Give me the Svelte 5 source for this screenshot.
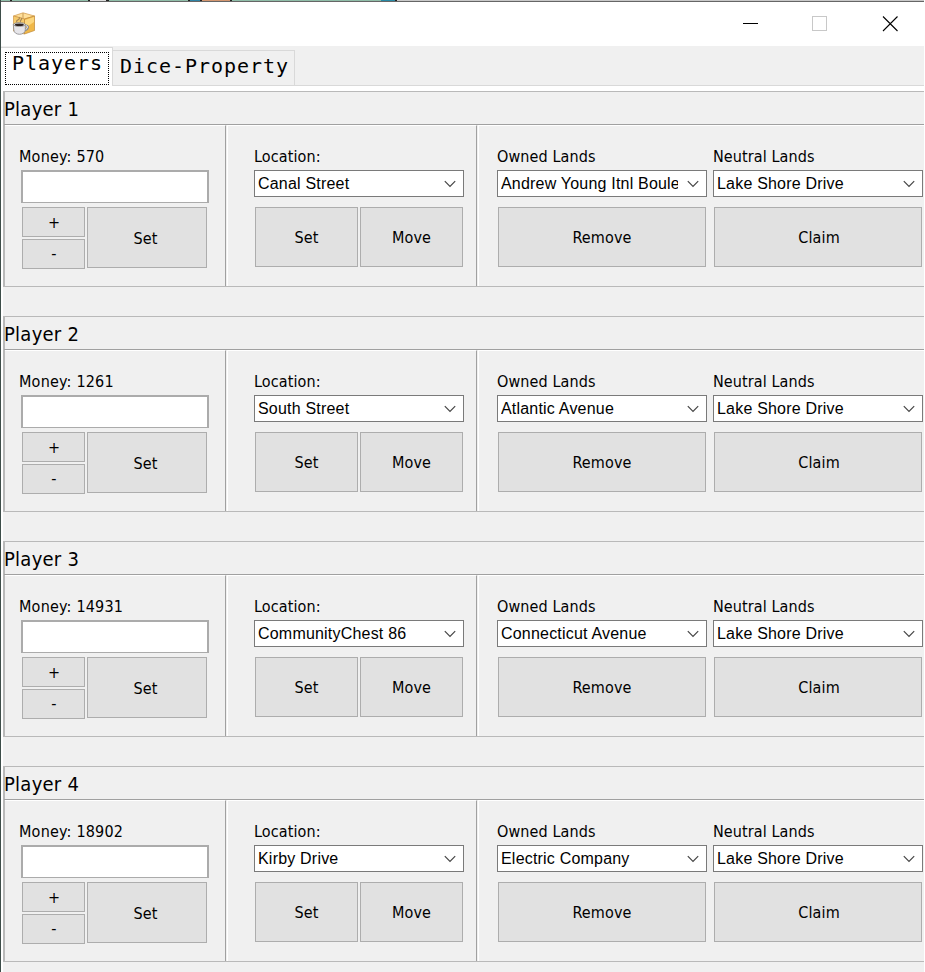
<script>
  const players = [
    { name: 'Player 1', money: 570, location: 'Canal Street', owned: 'Andrew Young Itnl Boulevard', neutral: 'Lake Shore Drive' },
    { name: 'Player 2', money: 1261, location: 'South Street', owned: 'Atlantic Avenue', neutral: 'Lake Shore Drive' },
    { name: 'Player 3', money: 14931, location: 'CommunityChest 86', owned: 'Connecticut Avenue', neutral: 'Lake Shore Drive' },
    { name: 'Player 4', money: 18902, location: 'Kirby Drive', owned: 'Electric Company', neutral: 'Lake Shore Drive' }
  ];
</script>

{#snippet combo(value)}
  <div class="combo">
    <span class="value">{value}</span>
    <svg width="12" height="8" viewBox="0 0 12 8"><path d="M.8 1.2 6 6.4 11.2 1.2" fill="none" stroke="#444" stroke-width="1.2" /></svg>
  </div>
{/snippet}

<div class="window">
  <div class="backdrop"></div>
  <header class="titlebar">
    <svg class="logo" width="24" height="24" viewBox="0 0 24 24">
      <path d="M1.5 4 11 .8 22.5 4 12.5 7z" fill="#ffe09a" stroke="#cf9648" stroke-width=".7" />
      <path d="M1.5 4 12.5 7v15L1.5 19z" fill="#f6cb6c" stroke="#cf9648" stroke-width=".7" />
      <path d="M12.5 7 22.5 4v14.5L12.5 22z" fill="#f0b848" stroke="#bf8838" stroke-width=".7" />
      <path d="M13 8 22 5v5l-9 6z" fill="#ffdf8c" opacity=".8" />
      <path d="M11 1v5.6" stroke="#c99a55" />
      <path d="M5 10c-2-2 4-2 2-5M8.5 10c-1-2 2-2 1-4" fill="none" stroke="#a58656" stroke-width="1.1" />
      <path d="M13 13.8c4.5-1.2 3.6 4.2-1 4.2" fill="none" stroke="#88888c" stroke-width="2" />
      <path d="M13 13.8c4-1 3 4-1 4" fill="none" stroke="#eee" />
      <path d="M1.3 12.5h12v5.3c0 6-11.5 6-11.5 0z" fill="#e7e6ea" stroke="#88868a" stroke-width=".8" />
      <ellipse cx="7.3" cy="12.5" rx="5.9" ry="1.9" fill="#f5f5f5" stroke="#777" stroke-width=".7" />
      <ellipse cx="7.3" cy="12.8" rx="4.6" ry="1.2" fill="#2f2320" />
    </svg>
    <svg class="controls" width="156" height="16" viewBox="0 0 156 16">
      <path d="M0 7.5h15" stroke="#000" />
      <rect x="69.5" y=".5" width="14" height="14" fill="none" stroke="#c8c8c8" />
      <path d="M140 .5 154.5 15M154.5 .5 140 15" stroke="#000" stroke-width="1.1" />
    </svg>
  </header>

  <nav class="tabs">
    <div class="tab active"><span>Players</span></div>
    <div class="tab">Dice-Property</div>
  </nav>

  <main>
    {#each players as p}
      <section class="player">
        <h2>{p.name}</h2>
        <div class="columns">
          <div class="col money">
            <div class="label">Money: {p.money}</div>
            <input type="text" aria-label="Money" />
            <div class="row">
              <div class="steps">
                <button>+</button>
                <button>-</button>
              </div>
              <button class="set">Set</button>
            </div>
          </div>
          <div class="col location">
            <div class="label">Location:</div>
            {@render combo(p.location)}
            <div class="row actions">
              <button>Set</button>
              <button>Move</button>
            </div>
          </div>
          <div class="col lands">
            <div class="land">
              <div class="label">Owned Lands</div>
              {@render combo(p.owned)}
              <div class="row actions"><button>Remove</button></div>
            </div>
            <div class="land">
              <div class="label">Neutral Lands</div>
              {@render combo(p.neutral)}
              <div class="row actions"><button class="claim">Claim</button></div>
            </div>
          </div>
        </div>
      </section>
    {/each}
  </main>
</div>

<style>
  :global(body) { margin: 0; overflow: hidden; background: #fff; }
  .window, .window * { box-sizing: border-box; }
  .window {
    width: 924px; height: 972px; overflow: hidden; background: #fff;
    border-left: 1px solid #3d4d49; color: #000;
    font: 16px/20px "DejaVu Sans Condensed", "DejaVu Sans", sans-serif;
    font-stretch: condensed;
    display: flex; flex-direction: column;
  }
  .backdrop {
    height: 2px; flex: none; border-bottom: 1px solid #666;
    background: linear-gradient(90deg, #8fbda8 0 9px, #222 9px 11px, #8fbda8 11px 87px, #222 87px 89px, #ddd 89px 105px, #222 105px 108px, #8fbda8 108px 187px, #222 187px 189px, #2f83a5 189px 199px, #222 199px 201px, #d39670 201px 229px, #222 229px 231px, #8fbda8 231px 380px, #2889a5 380px 394px, #222 394px 396px, #c9c9c9 396px);
  }
  .titlebar {
    height: 44px; flex: none; display: flex; justify-content: space-between;
    padding: 9px 25px 0 11px;
  }
  .controls { margin-top: 5px; }
  .logo { margin-top: 1px; }
  .tabs {
    height: 40px; flex: none; display: flex; align-items: flex-end;
    background: linear-gradient(#d9d9d9, #d9d9d9) 0 100% / 100% 1px no-repeat #f0f0f0;
    font: 20px/30px "DejaVu Sans Mono", monospace; letter-spacing: .96px;
  }
  .tab {
    height: 36px; width: 182px; border: 1px solid #d9d9d9; border-left: 0;
    padding: 0 0 0 7px; white-space: nowrap;
  }
  .tab.active {
    height: 39px; width: 112px; background: #fff; border-bottom: 0; padding: 4px 0 0 4px;
  }
  .tab.active span {
    display: block; width: 104px; height: 33px; border: 1px dotted #000;
    padding-left: 6px; line-height: 20px;
  }
  main {
    margin: 5px 0 0 2px; background: #f0f0f0; flex: 1; min-height: 0;
  }
  .player {
    height: 196px; margin-bottom: 29px; border: solid #b9b9b9;
    border-width: 1px 0 1px 2px;
  }
  h2 {
    margin: 0; height: 33px; font: inherit; font-size: 20px; line-height: 35px;
    border-bottom: 1px solid #a0a0a0; letter-spacing: .25px;
    margin-left: -1px;
  }
  .columns { display: flex; height: 161px; }
  .col {
    height: 161px; border-top: 1px solid #fff; padding-top: 21px;
  }
  .money { width: 221px; border-right: 1px solid #a0a0a0; padding-left: 14px; }
  .money .label { letter-spacing: .2px; }
  .location { width: 250px; margin-left: 1px; border-left: 1px solid #fff; border-right: 1px solid #a0a0a0; padding-left: 26px; }
  .location .actions { width: 210px; }
  .lands { flex: 1; margin-left: 1px; border-left: 1px solid #fff; padding-left: 18px; display: flex; gap: 6px; }
  .land { width: 210px; flex: none; }
  .label { height: 23px; line-height: 19px; letter-spacing: .1px; }
  input {
    display: block; width: 188px; height: 33px; margin: 0 0 4px 2px; padding: 0 4px;
    border: 2px solid #ababab; border-bottom-width: 1px; border-radius: 0; background: #fff; outline: 0;
  }
  .row { display: flex; gap: 2px; padding-left: 3px; }
  .steps { display: flex; flex-direction: column; gap: 2px; width: 63px; }
  button {
    border: 1px solid #adadad; border-radius: 0; background: #e1e1e1; color: #000;
    font: inherit; padding: 1px 0 0; margin: 0; letter-spacing: .15px;
  }
  .steps button { width: 63px; height: 30px; padding: 2px 0 0 1px; }
  .steps button:last-child { padding-top: 0; }
  .set { width: 120px; height: 61px; padding: 2px 3px 0 0; }
  .actions { margin-top: 10px; padding: 0 1px; }
  .actions button { flex: 1; height: 60px; padding-top: 2px; }
  .actions .claim { padding-left: 2px; }
  .combo {
    width: 210px; height: 27px; border: 1px solid #7a7a7a; background: #fff;
    display: flex; align-items: center; justify-content: space-between;
    padding: 0 7px 0 3px; font: 16px/22px "Liberation Sans", Arial, sans-serif; letter-spacing: .2px;
  }
  .value { width: 177px; overflow: hidden; white-space: nowrap; }
  .combo svg { flex: none; }
</style>
